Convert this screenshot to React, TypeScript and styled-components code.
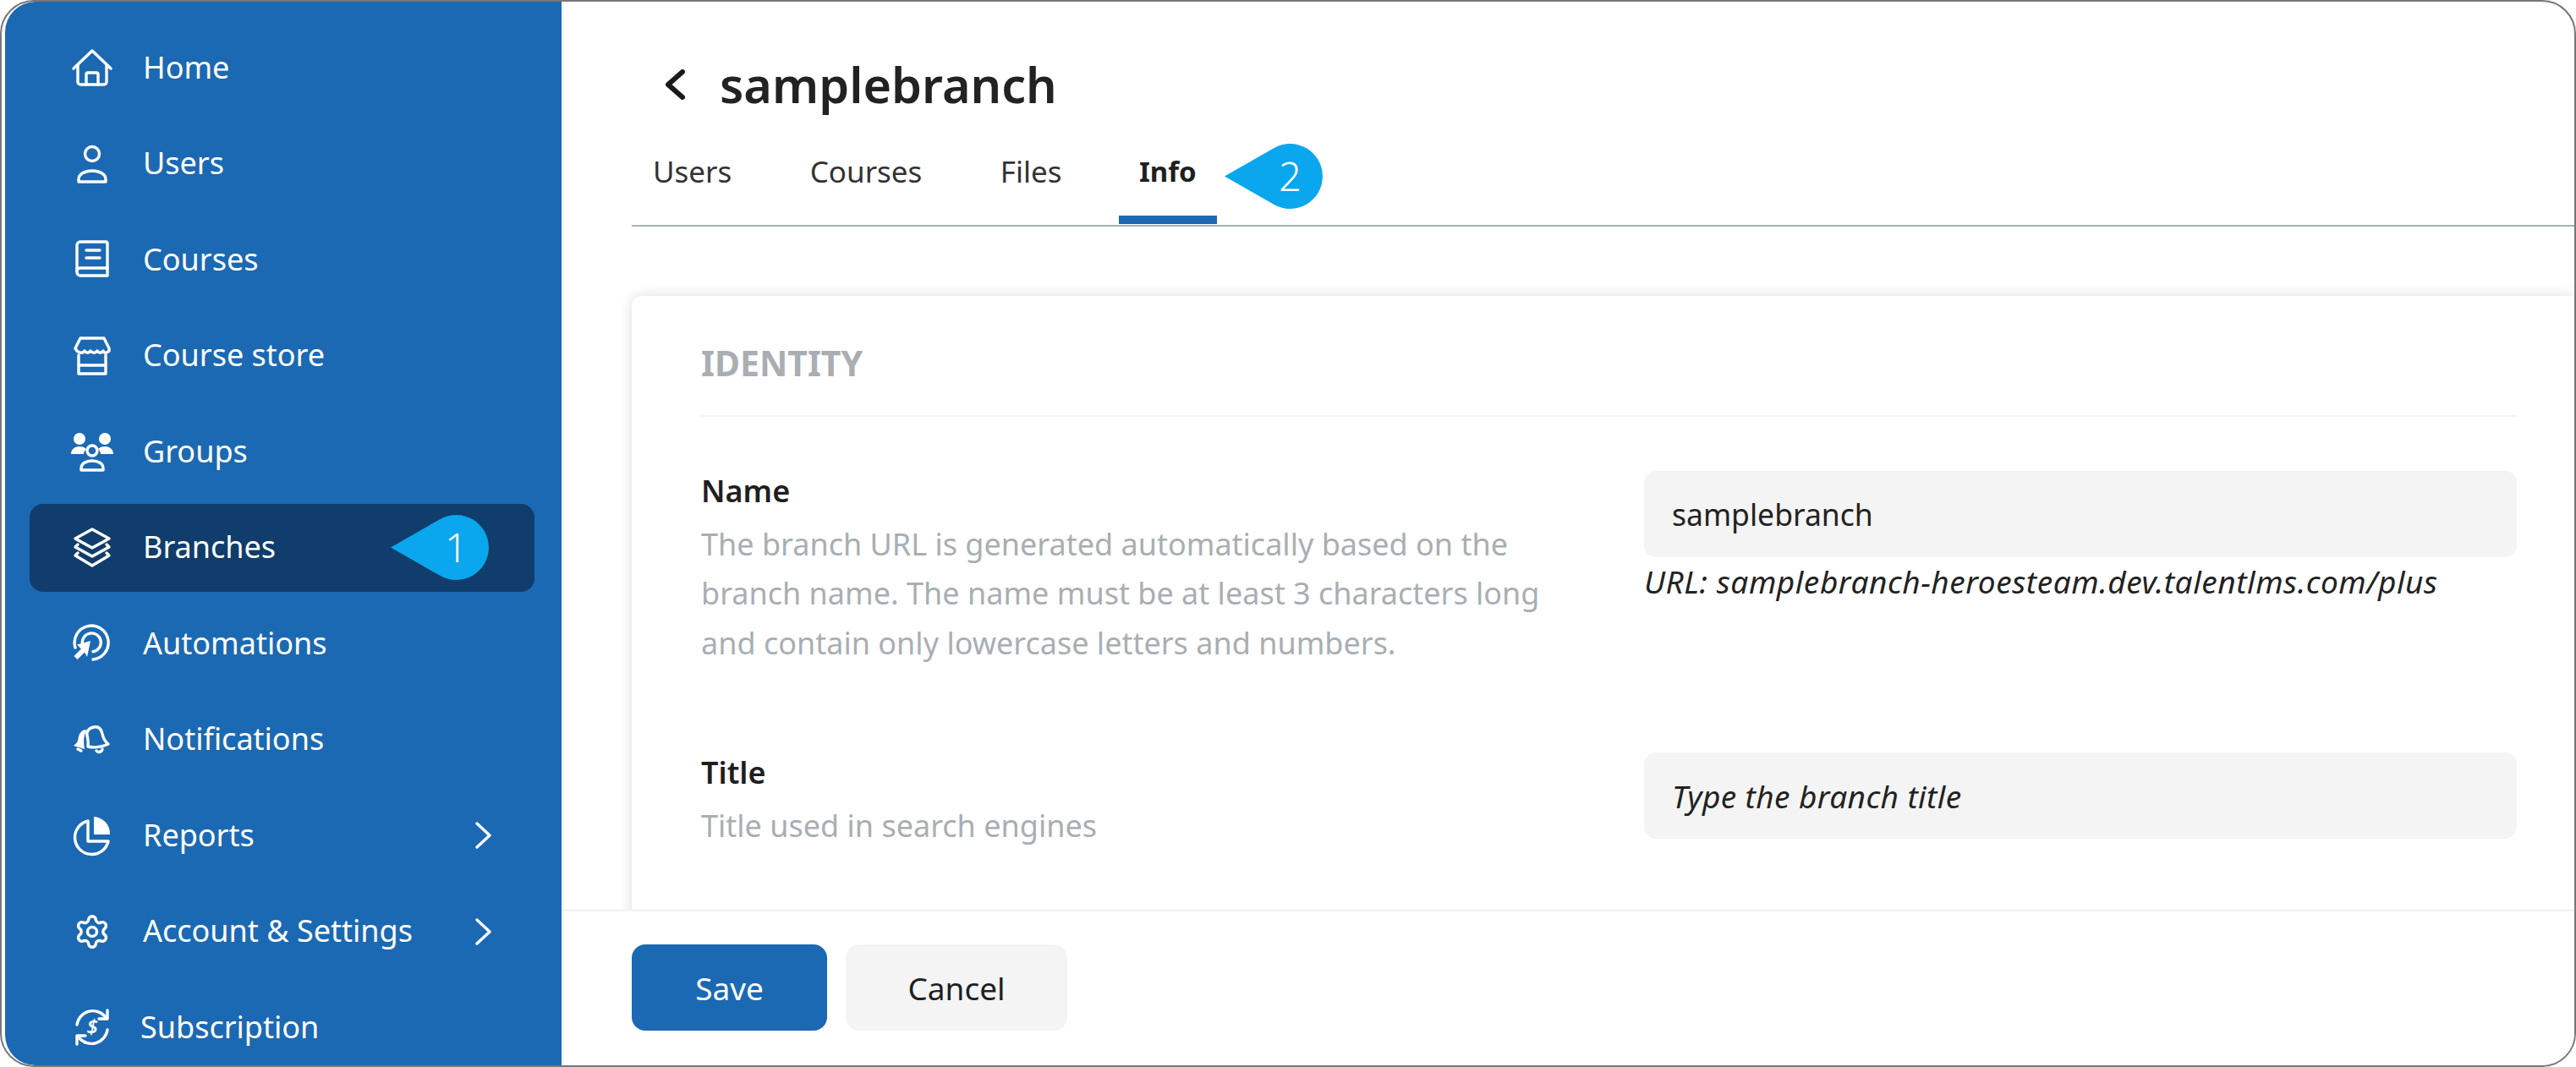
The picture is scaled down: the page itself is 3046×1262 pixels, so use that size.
import { ReactNode } from "react";
import styled, { createGlobalStyle } from "styled-components";
import { Settings } from "lucide-react";

const GlobalStyle = createGlobalStyle`
  html, body {
    margin: 0;
    padding: 0;
    height: 100%;
    background: #fff;
  }
  #root {
    height: 100%;
  }
  * {
    box-sizing: border-box;
  }
`;

const AppWindow = styled.div`
  width: 100vw;
  height: 100vh;
  display: flex;
  overflow: hidden;
  background: #fff;
  border: 2px solid #777;
  border-radius: 40px;
  padding-left: 4px;
  font-family: "Noto Sans", sans-serif;
  color: #1f1f1f;
`;

const Sidebar = styled.nav`
  width: 658px;
  flex-shrink: 0;
  background: #1c69b3;
  border-radius: 36px 0 0 36px;
  padding: 26px 32px 0 29px;
  display: flex;
  flex-direction: column;
  gap: 9.5px;
`;

const NavItem = styled.div<{ $active?: boolean }>`
  position: relative;
  height: 104px;
  flex-shrink: 0;
  display: flex;
  align-items: center;
  padding: 0 51px 0 52px;
  border-radius: 16px;
  color: #fff;
  font-size: 36px;
  background: ${(p) => (p.$active ? "#103d6b" : "transparent")};
`;

const NavIcon = styled.svg`
  width: 50px;
  height: 50px;
  margin-left: -3px;
  flex-shrink: 0;
  fill: none;
  stroke: #fff;
  stroke-width: 3.4;
  stroke-linecap: round;
  stroke-linejoin: round;
`;

const GearSlot = styled.span`
  width: 50px;
  height: 50px;
  margin-left: -3px;
  flex-shrink: 0;
  display: flex;
  align-items: center;
  justify-content: center;
`;

const NavLabel = styled.span<{ $tight?: boolean }>`
  margin-left: ${(p) => (p.$tight ? "32px" : "35px")};
  margin-top: -2px;
  white-space: nowrap;
`;

const NavChevron = styled.svg`
  width: 20px;
  height: 32px;
  margin-left: auto;
  fill: none;
  stroke: #fff;
  stroke-width: 3.4;
  stroke-linecap: round;
  stroke-linejoin: round;
`;

const Callout = styled.div<{ $top: number; $right: number }>`
  position: absolute;
  top: ${(p) => p.$top}px;
  right: ${(p) => p.$right}px;
  width: 117px;
  height: 77px;
  display: flex;
  align-items: center;
  justify-content: center;
  padding-left: 40px;
  color: #fff;
  font-size: 47px;
  font-weight: 300;
  line-height: 1;
`;

const CalloutShape = styled.svg`
  position: absolute;
  inset: 0;
  width: 100%;
  height: 100%;
  fill: #0aa6ee;
`;

const CalloutNumber = styled.span`
  position: relative;
`;

const Main = styled.main`
  flex: 1;
  min-width: 0;
  display: flex;
  flex-direction: column;
`;

const TitleRow = styled.div`
  display: flex;
  align-items: center;
  height: 60px;
  margin-top: 68px;
  padding-left: 121px;
  flex-shrink: 0;
`;

const BackIcon = styled.svg`
  width: 26px;
  height: 36px;
  fill: none;
  stroke: #1a1a1a;
  stroke-width: 6;
  stroke-linecap: round;
  stroke-linejoin: round;
`;

const PageTitle = styled.h1`
  margin: 0 0 0 40px;
  font-size: 57.5px;
  font-weight: 600;
  line-height: 60px;
  color: #222;
`;

const TabBar = styled.div`
  display: flex;
  gap: 42.4px;
  height: 114.5px;
  margin-top: 23px;
  margin-left: 83px;
  flex-shrink: 0;
  border-bottom: 2.5px solid #a9aeb2;
  position: relative;
`;

const Tab = styled.div<{ $active?: boolean }>`
  position: relative;
  height: 112px;
  padding: 0 ${(p) => (p.$active ? "24px" : "25px")};
  line-height: 100px;
  font-size: ${(p) => (p.$active ? "33px" : "35px")};
  font-weight: ${(p) => (p.$active ? 700 : 400)};
  color: ${(p) => (p.$active ? "#1f1f1f" : "#333")};

  &::after {
    content: "";
    display: ${(p) => (p.$active ? "block" : "none")};
    position: absolute;
    left: 0;
    right: 0;
    bottom: 0;
    height: 10px;
    background: #1c69b3;
  }
`;

const ScrollArea = styled.div`
  flex: 1;
  min-height: 0;
  overflow: hidden;
  padding: 82px 0 0 83px;
`;

const Card = styled.section`
  background: #fff;
  border-radius: 12px 0 0 0;
  box-shadow: 0 0 16px rgba(0, 0, 0, 0.14);
  padding: 56px 68px 120px 82px;
`;

const CardHeading = styled.h2`
  margin: 0;
  height: 87px;
  border-bottom: 2px solid #f4f4f4;
  font-size: 41px;
  line-height: 46px;
  font-weight: 700;
  color: #a9aeb2;
`;

const FormRow = styled.div`
  display: grid;
  grid-template-columns: 1115px 1fr;
  margin-top: 64px;

  & + & {
    margin-top: 100px;
  }
`;

const FieldText = styled.div``;

const FieldLabel = styled.div`
  font-size: 36px;
  line-height: 48px;
  font-weight: 600;
  color: #1f1f1f;
`;

const FieldHelp = styled.div`
  margin-top: 10px;
  max-width: 1000px;
  font-size: 36px;
  line-height: 58.5px;
  color: #a9aeb2;
`;

const FieldInput = styled.div<{ $placeholder?: boolean }>`
  height: 102px;
  display: flex;
  align-items: center;
  padding: 0 33px;
  background: #f4f4f4;
  border-radius: 14px;
  font-size: ${(p) => (p.$placeholder ? "37px" : "35.5px")};
  letter-spacing: ${(p) => (p.$placeholder ? "0.4px" : "0")};
  font-style: ${(p) => (p.$placeholder ? "italic" : "normal")};
  color: #222;
`;

const FieldHint = styled.div`
  margin-top: 6px;
  font-size: 37px;
  line-height: 46px;
  letter-spacing: 0.55px;
  font-style: italic;
  white-space: nowrap;
  color: #222;
`;

const Footer = styled.footer`
  height: 185px;
  flex-shrink: 0;
  display: flex;
  gap: 22px;
  padding: 39px 0 0 83px;
  background: #fff;
  border-top: 3px solid #f4f4f4;
  position: relative;
`;

const Button = styled.div<{ $primary?: boolean }>`
  height: 102px;
  width: ${(p) => (p.$primary ? "231px" : "262px")};
  display: flex;
  align-items: center;
  justify-content: center;
  border-radius: 16px;
  font-size: 37px;
  background: ${(p) => (p.$primary ? "#1c69b3" : "#f4f4f4")};
  color: ${(p) => (p.$primary ? "#fff" : "#1f1f1f")};
`;

const filled = { fill: "#fff", stroke: "none" };

const icons: Record<string, ReactNode> = {
  home: (
    <>
      <path d="M3 26 25 5l22 21" />
      <path d="M8 22v20a3 3 0 0 0 3 3h28a3 3 0 0 0 3-3V22" />
      <path d="M18 45V33a2 2 0 0 1 2-2h10a2 2 0 0 1 2 2v12" />
    </>
  ),
  users: (
    <>
      <circle cx="25" cy="13" r="8.5" />
      <path d="M9 46v-3c0-6 7-10 16-10s16 4 16 10v3z" />
    </>
  ),
  courses: (
    <>
      <path d="M11 4h30a2 2 0 0 1 2 2v38H11a4 4 0 0 1-4-4V8a4 4 0 0 1 4-4z" />
      <path d="M7 38a4 4 0 0 1 4-3h32" />
      <path d="M18 14h16M18 23h16" />
    </>
  ),
  store: (
    <>
      <path d="M11 4h28l6 12v3c-3 3-6 3-7 0-2 3-5 3-7 0-2 3-6 3-8 0-2 3-5 3-7 0-2 3-6 3-9 0l-2-3 6-12z" />
      <path d="M9 24v22h32V24" />
      <path d="M9 36h32" />
    </>
  ),
  groups: (
    <>
      <circle cx="10" cy="10" r="7" style={filled} />
      <circle cx="40" cy="10" r="7" style={filled} />
      <path d="M0 28c0-6 5-9 10-9 3 0 6 1 8 3-2 2-3 4-3 6z" style={filled} />
      <path d="M50 28c0-6-5-9-10-9-3 0-6 1-8 3 2 2 3 4 3 6z" style={filled} />
      <circle cx="25" cy="24" r="6" />
      <path d="M12 47v-2c0-6 6-9 13-9s13 3 13 9v2z" />
    </>
  ),
  branches: (
    <>
      <path d="M25 3 45 14 25 25 5 14z" />
      <path d="M8 21 5 24l20 11 20-11-3-3" />
      <path d="M8 31 5 34l20 12 20-12-3-3" />
    </>
  ),
  automations: (
    <>
      <path d="M5 30A20 20 0 1 1 26 44" />
      <path d="M13.500 26A11 11 0 1 1 26 34.800" />
      <path d="M23 22 7 26.500 12 31.500 3.500 40 7.500 44 16 35.500 19 41Z" style={filled} />
    </>
  ),
  notifications: (
    <>
      <path d="M16 13C11 15 9 19 8.500 24 8 27 6 30 3 32L16 36C15 28 14 20 19 14Z" style={filled} />
      <path d="M8 36l4 2" />
      <path d="M20 33C21 27 20 24 19 20 18 15 21 11 27 10 33 9 36 13 37 18 38 23 40 27 44 30 37 33 28 35 20 33Z" />
      <path d="M30 38a4 4 0 0 0 7-2" />
    </>
  ),
  reports: (
    <>
      <path d="M20 8a20 20 0 1 0 24 24H20z" />
      <path d="M27 3a20 20 0 0 1 19 21H27z" style={filled} />
    </>
  ),
  subscription: (
    <>
      <path d="M7 22A19 19 0 0 1 40 12" />
      <path d="M43 5v10H33" />
      <path d="M43 28A19 19 0 0 1 10 38" />
      <path d="M7 45V35h10" />
      <text x="25" y="33" fontSize="24" fontWeight="600" textAnchor="middle" fill="#fff" stroke="none" fontStyle="italic">
        $
      </text>
    </>
  ),
};

function Badge({ value, top, right }: { value: number; top: number; right: number }) {
  return (
    <Callout $top={top} $right={right}>
      <CalloutShape viewBox="0 0 117 77">
        <path d="M1 38.500 59.600 4.900A38.500 38.500 0 1 1 59.600 72.100Z" />
      </CalloutShape>
      <CalloutNumber>{value}</CalloutNumber>
    </Callout>
  );
}

const navItems = [
  { id: "home", label: "Home" },
  { id: "users", label: "Users" },
  { id: "courses", label: "Courses" },
  { id: "store", label: "Course store" },
  { id: "groups", label: "Groups" },
  { id: "branches", label: "Branches", active: true },
  { id: "automations", label: "Automations" },
  { id: "notifications", label: "Notifications" },
  { id: "reports", label: "Reports", more: true },
  { id: "settings", label: "Account & Settings", more: true },
  { id: "subscription", label: "Subscription", tight: true },
];

export default function App() {
  return (
    <AppWindow>
      <GlobalStyle />
      <Sidebar>
        {navItems.map((item) => (
          <NavItem key={item.id} $active={item.active}>
            {item.id === "settings" ? (
              <GearSlot>
                <Settings size={44} color="#fff" strokeWidth={1.9} />
              </GearSlot>
            ) : (
              <NavIcon viewBox="0 0 50 50">{icons[item.id]}</NavIcon>
            )}
            <NavLabel $tight={item.tight}>{item.label}</NavLabel>
            {item.more && (
              <NavChevron viewBox="0 0 20 32">
                <path d="M3 2l15 14L3 30" />
              </NavChevron>
            )}
            {item.active && <Badge value={1} top={13} right={54} />}
          </NavItem>
        ))}
      </Sidebar>
      <Main>
        <TitleRow>
          <BackIcon viewBox="0 0 26 36">
            <path d="M22 3 5 18l17 15" />
          </BackIcon>
          <PageTitle>samplebranch</PageTitle>
        </TitleRow>
        <TabBar>
          <Tab>Users</Tab>
          <Tab>Courses</Tab>
          <Tab>Files</Tab>
          <Tab $active>Info</Tab>
          <Badge value={2} top={17} right={1480} />
        </TabBar>
        <ScrollArea>
          <Card>
            <CardHeading>IDENTITY</CardHeading>
            <FormRow>
              <FieldText>
                <FieldLabel>Name</FieldLabel>
                <FieldHelp>
                  The branch URL is generated automatically based on the branch name. The name must be at least 3 characters long and contain only lowercase letters and numbers.
                </FieldHelp>
              </FieldText>
              <div>
                <FieldInput>samplebranch</FieldInput>
                <FieldHint>URL: samplebranch-heroesteam.dev.talentlms.com/plus</FieldHint>
              </div>
            </FormRow>
            <FormRow>
              <FieldText>
                <FieldLabel>Title</FieldLabel>
                <FieldHelp>Title used in search engines</FieldHelp>
              </FieldText>
              <FieldInput $placeholder>Type the branch title</FieldInput>
            </FormRow>
          </Card>
        </ScrollArea>
        <Footer>
          <Button $primary>Save</Button>
          <Button>Cancel</Button>
        </Footer>
      </Main>
    </AppWindow>
  );
}
